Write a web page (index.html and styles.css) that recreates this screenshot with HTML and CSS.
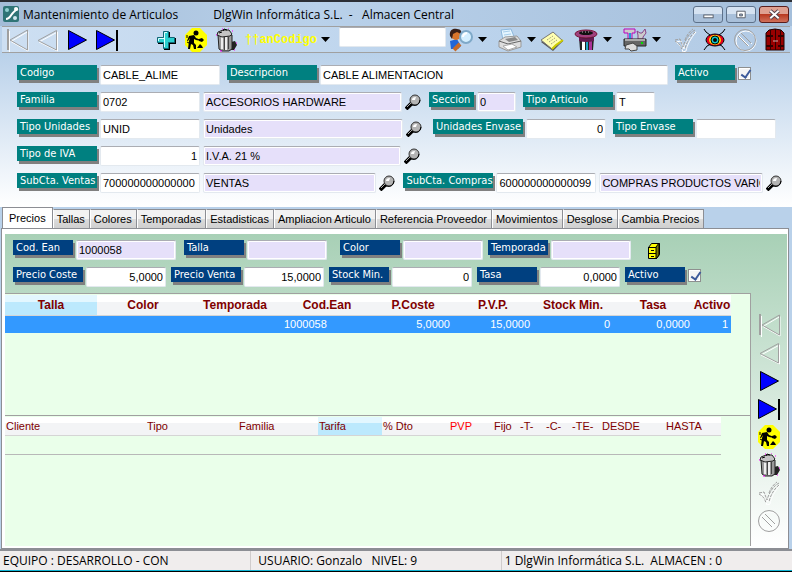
FILE: index.html
```
<!DOCTYPE html>
<html lang="es">
<head>
  <meta charset="UTF-8" />
  <meta name="viewport" content="width=device-width, initial-scale=1" />
  <title>Mantenimiento de Articulos</title>
  <link rel="stylesheet" href="styles.css">
</head>
<body>

  <!-- Iconos compartidos -->
  <svg class="sprites" aria-hidden="true">
    <symbol id="i-first" viewBox="0 0 24 24">
      <path d="M3.5 2v21M22 2.500L5 12.500L22 22z" transform="translate(1 1)" fill="none" stroke="#fff"/>
      <path d="M2 1h2v21H2z" fill="#a0a0a0"/>
      <path d="M22.500 2L5 12L22.500 22z" fill="none" stroke="#a0a0a0"/>
    </symbol>
    <symbol id="i-prev" viewBox="0 0 24 24">
      <path d="M21.500 3L3 13L21.500 22z" transform="translate(1 1)" fill="none" stroke="#fff"/>
      <path d="M21.500 2.500L3 12.500L21.500 22z" fill="none" stroke="#a0a0a0"/>
    </symbol>
    <symbol id="i-next" viewBox="0 0 24 24">
      <path d="M3.500 2.500L21.500 12L3.500 21.500z" fill="#00f" stroke="#000"/>
    </symbol>
    <symbol id="i-last" viewBox="0 0 24 24">
      <path d="M1.500 2.500L19.500 12L1.500 21.500z" fill="#00f" stroke="#000"/>
      <path d="M21 2h2v21h-2z" fill="#000"/>
    </symbol>
    <symbol id="i-work" viewBox="0 0 24 24">
      <path d="M8 0h8l7 7v10l-7 7H8l-7-7V7z" fill="#ff0"/>
      <circle cx="12" cy="5" r="2.500"/>
      <path d="M5 8l5-1 2 3 5 2v1l-5-1-2-1 0 4 2 2v4h-2l-1-4-2-1-1 5H4l1-8 1-3-2 3H3z"/>
      <path d="M15 11l3-1 2 2-2 2-3-1z"/>
      <path d="M13 20l3-4 2 2 1 2z"/>
      <path d="M3 7v3M3 14l2 1" stroke="#000"/>
    </symbol>
    <symbol id="i-trash" viewBox="0 0 24 24">
      <path d="M17 14l4-1 2 4-3 5h-4z" fill="#222"/>
      <path d="M4 7h14v14l-3 2H8l-3-2z" fill="#999" stroke="#222"/>
      <path d="M8 9v12M12 9v13" stroke="#eee" stroke-width="2"/>
      <path d="M10.500 9v13M14.500 9v12" stroke="#444"/>
      <path d="M3 7l1-3 5-2 6 0 3 4-2 2-8 1z" fill="#c4c4c4" stroke="#222"/>
      <path d="M9 3l1-2 3 1M5 5l3-1" fill="none" stroke="#000"/>
      <path d="M2 7h1M8 1h1M14 0h1M18 3h1M20 22h1M22 15h1M6 23h2" stroke="#f0f" stroke-width="1"/>
    </symbol>
    <symbol id="i-check" viewBox="0 0 24 24">
      <path d="M2 13l5-1 3 8C12 13 16 6 22 3C17 9 13 16 12 22L9 23C8 19 6 16 2 13" transform="translate(1 1)" fill="none" stroke="#fff"/>
      <path d="M2 12l5-1 3 8C12 12 16 5 22 2M22 4C17 8 13 15 12 21M2 13C6 15 8 18 9 22M12 12C13 8 17 3 20 1" fill="none" stroke="#a0a0a0" stroke-dasharray="3 1"/>
    </symbol>
    <symbol id="i-no" viewBox="0 0 24 24">
      <circle cx="13" cy="13" r="10" fill="none" stroke="#fff"/>
      <circle cx="12" cy="12" r="10.500" fill="none" stroke="#a0a0a0"/>
      <path d="M6 8l10 10M9 6l10 10" stroke="#fff"/>
      <path d="M5 8l10 10M8 5l10 10" stroke="#a0a0a0"/>
    </symbol>
    <symbol id="i-lens" viewBox="0 0 16 16">
      <path d="M1 15l6-6" stroke="#000" stroke-width="4"/>
      <path d="M2 13l4-4" stroke="#aaa"/>
      <circle cx="10" cy="6" r="5" fill="#b4b4b4" stroke="#333" stroke-width="1"/>
      <path d="M7 6q0-3 4-3l-1 3z" fill="#fff"/>
      <path d="M7 11q7 2 8-5" fill="none" stroke="#000"/>
    </symbol>
    <symbol id="i-caret" viewBox="0 0 9 5">
      <path d="M0 0h9L4.500 5z"/>
    </symbol>
  </svg>

  <header class="titlebar">
    <svg class="app-icon" viewBox="0 0 16 16">
      <rect width="16" height="16" rx="2" fill="#2f7476"/>
      <path d="M3 13c4 0 4-3 6-5s3-4 6-5" fill="none" stroke="#fff" stroke-width="2"/>
      <circle cx="4" cy="4" r="2" fill="#8fd0d0"/>
      <circle cx="12" cy="12" r="2" fill="#cfe6ee"/>
      <circle cx="13" cy="3" r="2" fill="#fff"/>
    </svg>
    <span class="title-main">Mantenimiento de Articulos</span>
    <span class="title-company">DlgWin Informática S.L.&nbsp; -&nbsp;&nbsp; Almacen Central</span>
    <div class="window-buttons">
      <button aria-label="Minimizar"><svg viewBox="0 0 30 16"><rect x="10.500" y="8.500" width="10" height="3" fill="#fff" stroke="#555b66"/></svg></button>
      <button aria-label="Maximizar"><svg viewBox="0 0 30 16"><path d="M10.500 4.500h9v7h-9zM13.500 7.500h3v2h-3z" fill="#fff" fill-rule="evenodd" stroke="#555b66"/></svg></button>
      <button class="close" aria-label="Cerrar"><svg viewBox="0 0 30 16"><path d="M11 4l9 8M20 4l-9 8" stroke="#54404a" stroke-width="4"/><path d="M11 4l9 8M20 4l-9 8" stroke="#fff" stroke-width="2"/></svg></button>
    </div>
  </header>

  <nav class="toolbar">
    <div class="tools">
      <button aria-label="Primero" disabled><svg><use href="#i-first"/></svg></button>
      <button aria-label="Anterior" disabled><svg><use href="#i-prev"/></svg></button>
      <button aria-label="Siguiente"><svg><use href="#i-next"/></svg></button>
      <button aria-label="Ultimo"><svg><use href="#i-last"/></svg></button>
    </div>
    <div class="tools edit-tools">
      <button aria-label="Nuevo">
        <svg viewBox="0 0 24 24">
          <path d="M10 4h6v6h6v6h-6v6h-6v-6H4v-6h6z" fill="#000"/>
          <path d="M9.500 3.500h5v6h6v5h-6v6h-5v-6h-6v-5h6z" fill="#2cd0d0" stroke="#167"/>
          <path d="M10.500 19V4.500H13M4.500 13v-2.500H11" fill="none" stroke="#dff"/>
        </svg>
      </button>
      <button aria-label="Modificar"><svg><use href="#i-work"/></svg></button>
      <button aria-label="Borrar"><svg><use href="#i-trash"/></svg></button>
    </div>
    <div class="order">
      <select aria-label="Orden"><option>††anCodigo</option></select>
      <svg class="caret"><use href="#i-caret"/></svg>
    </div>
    <input class="search" type="text" aria-label="Buscar">
    <div class="tools">
      <button aria-label="Buscar">
        <svg viewBox="0 0 24 24">
          <path d="M1 13l7-2 4 7-3 3H2z" fill="#2266d8"/>
          <path d="M5 22l6-6" stroke="#c86a28" stroke-width="4"/>
          <circle cx="7" cy="7" r="5" fill="#d9762c"/>
          <path d="M1 8C0 2 4 0 8 1c4 0 5 3 4 5L8 4 4 6l-1 5z" fill="#3a2018"/>
          <circle cx="17" cy="9" r="6" fill="#d4efff" stroke="#7fa9c8" stroke-width="2"/>
          <path d="M14 9q0-3 4-4" fill="none" stroke="#fff" stroke-width="2"/>
        </svg>
      </button>
      <button class="drop" aria-label="Opciones de busqueda"><svg class="caret"><use href="#i-caret"/></svg></button>
    </div>
    <div class="tools menu-tools">
      <button aria-label="Imprimir">
        <svg viewBox="0 0 24 24">
          <path d="M5 12L3 2l10-1 4 10z" fill="#e5f5ff" stroke="#8bb7dc"/>
          <path d="M5 4l7-1M6 7l7-1" stroke="#a6cdea"/>
          <path d="M1 13l6-4 12-1 4 5v6l-13 4-9-4z" fill="#ddd" stroke="#999"/>
          <path d="M1 13l9 3 13-3" fill="none" stroke="#666"/>
          <path d="M7 11l10-2 3 3-9 2z" fill="#888"/>
          <path d="M5 18l9-2 5 3-9 3z" fill="#fff" stroke="#aaa"/>
        </svg>
      </button>
      <button class="drop" aria-label="Opciones de impresion"><svg class="caret"><use href="#i-caret"/></svg></button>
      <button class="note" aria-label="Notas">
        <svg viewBox="0 0 24 24">
          <path d="M1 14L12 5l11 8-10 10z" fill="#555"/>
          <path d="M1 12L13 4l10 9-11 8z" fill="#ffffb0" stroke="#777"/>
          <path d="M12 21l4-4 7-5" fill="none" stroke="#cc0" stroke-width="2"/>
          <path d="M7 12l6-4M9 14l6-4M11 16l6-4" stroke="#887" stroke-dasharray="1 1"/>
        </svg>
      </button>
    </div>
    <div class="tools menu-tools">
      <button aria-label="Asistente">
        <svg viewBox="0 0 24 24">
          <path d="M5 9h15l-1 13H6z" fill="#222"/>
          <path d="M8 12h3v10H8z" fill="#fff"/>
          <path d="M12 12h2v10h-2z" fill="#23a6c8"/>
          <path d="M15 12h3v10h-3z" fill="#a39"/>
          <ellipse cx="12" cy="6" rx="11" ry="4" fill="#a0407e" stroke="#713"/>
          <ellipse cx="12" cy="5" rx="7" ry="2" fill="#111"/>
          <path d="M5 9q7 3 15 0v4q-8 2-15 0z" fill="#631a50"/>
          <path d="M8 4h8" stroke="#bbb" stroke-dasharray="1 2"/>
        </svg>
      </button>
      <button class="drop" aria-label="Opciones del asistente"><svg class="caret"><use href="#i-caret"/></svg></button>
    </div>
    <div class="tools menu-tools">
      <button aria-label="Utilidades">
        <svg viewBox="0 0 24 24">
          <path d="M1 1h11v4H9v6H5V5H1z" fill="#ccc" stroke="#b0b"/>
          <path d="M6 5h2v6H6z" fill="#29d"/>
          <path d="M15 11V7l-1-4 3 2h2l3-4 1 4-3 4v2z" fill="#ccc" stroke="#848"/>
          <path d="M1 11h22v7H1z" fill="#666" stroke="#222"/>
          <path d="M2 11h20v2H2z" fill="#aaa"/>
          <path d="M18 15h2" stroke="#0d0" stroke-width="2"/>
          <path d="M3 17l7-2 4 3v4l-6 1-2-2H2z" fill="#ddd" stroke="#444"/>
        </svg>
      </button>
      <button class="drop" aria-label="Mas utilidades"><svg class="caret"><use href="#i-caret"/></svg></button>
    </div>
    <div class="tools end-tools">
      <button aria-label="Aceptar" disabled><svg><use href="#i-check"/></svg></button>
      <button aria-label="Ver">
        <svg viewBox="0 0 24 24">
          <path d="M1 1l2 3 4 3M22 1l-2 3-4 3M1 22l3-4 4-2M22 22l-3-4-4-2" fill="none" stroke="#000"/>
          <ellipse cx="12" cy="12" rx="9" ry="6" fill="#e8001c" stroke="#000"/>
          <ellipse cx="12" cy="12" rx="6" ry="5" fill="#ffd800"/>
          <circle cx="12" cy="12" r="4" fill="#1cc" stroke="#000"/>
          <circle cx="12" cy="12" r="2"/>
        </svg>
      </button>
      <button aria-label="Cancelar" disabled><svg><use href="#i-no"/></svg></button>
      <button aria-label="Salir">
        <svg viewBox="0 0 24 24">
          <path d="M3 22V5l3-3 6-1 6 1 3 3v17z" fill="#900" stroke="#200"/>
          <path d="M7.500 2v20M12.500 1v21M17.500 2v20" stroke="#300"/>
          <path d="M3 8h7M15 8h6M3 18h7M15 18h6" stroke="#300" stroke-width="2"/>
          <path d="M10 13h5" stroke="#caa"/>
        </svg>
      </button>
    </div>
  </nav>

  <form class="article">
    <div class="row row-code">
      <label class="tag w80" for="codigo">Codigo</label>
      <input class="w120" id="codigo" type="text" value="CABLE_ALIME">
      <label class="tag w90" for="descripcion">Descripcion</label>
      <input class="grow" id="descripcion" type="text" value="CABLE ALIMENTACION">
      <label class="tag w60" for="activo">Activo</label>
      <input id="activo" type="checkbox" checked>
    </div>
    <div class="row row-family">
      <label class="tag w80" for="familia">Familia</label>
      <input class="w100" id="familia" type="text" value="0702">
      <input class="grow" type="text" value="ACCESORIOS HARDWARE" aria-label="Nombre de familia" readonly>
      <button type="button" class="lens" aria-label="Buscar familia"><svg><use href="#i-lens"/></svg></button>
      <label class="tag w45" for="seccion">Seccion</label>
      <input class="w39" id="seccion" type="text" value="0" readonly>
      <label class="tag w90" for="tipo-articulo">Tipo Articulo</label>
      <input class="w39" id="tipo-articulo" type="text" value="T">
    </div>
    <div class="row row-units">
      <label class="tag w80" for="tipo-unidades">Tipo Unidades</label>
      <input class="w100" id="tipo-unidades" type="text" value="UNID">
      <input class="grow" type="text" value="Unidades" aria-label="Nombre de unidades" readonly>
      <button type="button" class="lens" aria-label="Buscar unidades"><svg><use href="#i-lens"/></svg></button>
      <label class="tag w90" for="unidades-envase">Unidades Envase</label>
      <input class="w80 num" id="unidades-envase" type="text" value="0">
      <label class="tag w80" for="tipo-envase">Tipo Envase</label>
      <input class="w80" id="tipo-envase" type="text">
    </div>
    <div class="row row-vat">
      <label class="tag w80" for="tipo-iva">Tipo de IVA</label>
      <input class="w100 num" id="tipo-iva" type="text" value="1">
      <input class="grow" type="text" value="I.V.A. 21 %" aria-label="Nombre de IVA" readonly>
      <button type="button" class="lens" aria-label="Buscar IVA"><svg><use href="#i-lens"/></svg></button>
    </div>
    <div class="row row-accounts">
      <label class="tag w80" for="ventas">SubCta. Ventas</label>
      <input class="w100" id="ventas" type="text" value="700000000000000">
      <input class="grow sales" type="text" value="VENTAS" aria-label="Nombre de ventas" readonly>
      <button type="button" class="lens" aria-label="Buscar subcuenta de ventas"><svg><use href="#i-lens"/></svg></button>
      <label class="tag w90" for="compras">SubCta. Compras</label>
      <input class="w100" id="compras" type="text" value="600000000000099">
      <input class="grow purchases" type="text" value="COMPRAS PRODUCTOS VARIO" aria-label="Nombre de compras" readonly>
      <button type="button" class="lens" aria-label="Buscar subcuenta de compras"><svg><use href="#i-lens"/></svg></button>
    </div>
  </form>

  <div class="tabs">
    <button class="active">Precios</button>
    <button>Tallas</button>
    <button>Colores</button>
    <button>Temporadas</button>
    <button>Estadisticas</button>
    <button>Ampliacion Articulo</button>
    <button>Referencia Proveedor</button>
    <button>Movimientos</button>
    <button>Desglose</button>
    <button>Cambia Precios</button>
  </div>

  <main class="page">
    <div class="panel">
      <form class="prices">
        <div class="row">
          <label class="tag w60" for="cod-ean">Cod. Ean</label>
          <input class="w100" id="cod-ean" type="text" value="1000058" readonly>
          <label class="tag w60" for="talla">Talla</label>
          <input class="w80" id="talla" type="text" readonly>
          <label class="tag w60 color-tag" for="color">Color</label>
          <input class="w80" id="color" type="text" readonly>
          <label class="tag w60" for="temporada">Temporada</label>
          <input class="w80" id="temporada" type="text" readonly>
          <button type="button" class="cabinet" aria-label="Archivo">
            <svg viewBox="0 0 14 18">
              <path d="M1.500 5.500l3-4h8v11l-3 4h-8z" fill="#ff0" stroke="#000"/>
              <path d="M9 5l3-4v12l-3 4z" fill="#770" stroke="#000"/>
              <path d="M1 5.500h8M1 11.500h8M4 8.500h3M4 14.500h3" stroke="#000"/>
            </svg>
          </button>
        </div>
        <div class="row">
          <label class="tag w70" for="coste">Precio Coste</label>
          <input class="w80 num" id="coste" type="text" value="5,0000">
          <label class="tag w70" for="venta">Precio Venta</label>
          <input class="w80 num" id="venta" type="text" value="15,0000">
          <label class="tag w60" for="stock">Stock Min.</label>
          <input class="w80 num" id="stock" type="text" value="0">
          <label class="tag w60" for="tasa">Tasa</label>
          <input class="w80 num" id="tasa" type="text" value="0,0000">
          <label class="tag w60" for="precio-activo">Activo</label>
          <input id="precio-activo" type="checkbox" checked>
        </div>
      </form>

      <div class="body">
        <div class="grids">
          <section class="grid">
            <table class="stock">
              <colgroup>
                <col class="c92"><col class="c92"><col class="c92"><col class="c92"><col class="c80"><col class="c80"><col class="c80"><col class="c80"><col class="c38">
              </colgroup>
              <thead>
                <tr><th class="sorted">Talla</th><th>Color</th><th>Temporada</th><th>Cod.Ean</th><th>P.Coste</th><th>P.V.P.</th><th>Stock Min.</th><th>Tasa</th><th>Activo</th></tr>
              </thead>
              <tbody>
                <tr><td></td><td></td><td></td><td>1000058</td><td class="num">5,0000</td><td class="num">15,0000</td><td class="num">0</td><td class="num">0,0000</td><td class="num">1</td></tr>
              </tbody>
            </table>
          </section>
          <section class="grid">
            <table class="rates">
              <colgroup>
                <col class="c141"><col class="c92"><col class="c80"><col class="c64"><col class="c47"><col class="c64"><col class="c26"><col class="c26"><col class="c26"><col class="c30"><col class="c64"><col class="c56">
              </colgroup>
              <thead>
                <tr><th>Cliente</th><th>Tipo</th><th>Familia</th><th class="sorted">Tarifa</th><th>% Dto</th><th class="pvp">PVP</th><th>Fijo</th><th>-T-</th><th>-C-</th><th>-TE-</th><th>DESDE</th><th>HASTA</th></tr>
              </thead>
              <tbody>
                <tr><td colspan="12"></td></tr>
              </tbody>
            </table>
          </section>
        </div>
        <nav class="side">
          <button aria-label="Primero" disabled><svg><use href="#i-first"/></svg></button>
          <button aria-label="Anterior" disabled><svg><use href="#i-prev"/></svg></button>
          <button aria-label="Siguiente"><svg><use href="#i-next"/></svg></button>
          <button aria-label="Ultimo"><svg><use href="#i-last"/></svg></button>
          <button aria-label="Modificar"><svg><use href="#i-work"/></svg></button>
          <button aria-label="Borrar"><svg><use href="#i-trash"/></svg></button>
          <button aria-label="Aceptar" disabled><svg><use href="#i-check"/></svg></button>
          <button aria-label="Cancelar" disabled><svg><use href="#i-no"/></svg></button>
        </nav>
      </div>
    </div>
  </main>

  <footer class="status">
    <span>EQUIPO : DESARROLLO - CON</span>
    <span>USUARIO: Gonzalo&nbsp;&nbsp; NIVEL: 9</span>
    <span>1 DlgWin Informática S.L.&nbsp; ALMACEN : 0</span>
  </footer>

</body>
</html>
```

FILE: styles.css
```
* {
  box-sizing: border-box;
}

body {
  margin: 0;
  min-height: 100vh;
  display: flex;
  flex-direction: column;
  border-bottom: 1px solid #000;
  font-family: "Liberation Sans", Arial, sans-serif;
  font-size: 11px;
  color: #000;
  background: #b9d1ea;
}

button {
  padding: 0;
  border: 0;
  background: none;
  font: inherit;
  color: inherit;
}

svg {
  display: block;
}

.sprites {
  position: absolute;
  width: 0;
  height: 0;
}

/* Barra de titulo */
.titlebar {
  display: flex;
  align-items: center;
  height: 26px;
  padding: 0 3px;
  border-top: 2px solid #2c2f36;
  background: linear-gradient(90deg, #a3bcd7, #b9d1ea 40%, #a5bfdb);
  font-family: "Open Sans", "Noto Sans", sans-serif;
  font-size: 12px;
}

.app-icon {
  width: 16px;
  height: 16px;
  margin-right: 4px;
}

.title-company {
  margin-left: 35px;
}

.window-buttons {
  display: flex;
  gap: 3px;
  margin-left: auto;
}

.window-buttons button {
  width: 30px;
  height: 17px;
  border: 1px solid #5d718a;
  border-radius: 3px;
  background: linear-gradient(#d5e2f1 50%, #a9c0da 50%);
}

.window-buttons .close {
  border-color: #5a1d1c;
  background: linear-gradient(#dfa091 50%, #b93a22 50%, #d0705a);
}

.window-buttons svg {
  width: 28px;
  height: 15px;
}

/* Barra de herramientas */
.toolbar {
  display: flex;
  align-items: center;
  height: 27px;
  margin: 0 2px;
  border-top: 1px solid #a0a0a0;
  border-bottom: 1px solid #a0a0a0;
  background: linear-gradient(90deg, #cddff2, #bbd3ec 60%, #b2cae4);
}

.tools {
  display: flex;
  align-items: center;
}

.tools button {
  width: 30px;
}

.tools svg {
  width: 24px;
  height: 24px;
  margin: 0 auto;
}

.tools .drop {
  width: 12px;
}

.tools .note {
  width: 24px;
  margin-left: 3px;
}

.toolbar .caret {
  width: 9px;
  height: 5px;
}

.edit-tools {
  margin-left: 29px;
}

.menu-tools {
  margin-left: 7px;
}

.end-tools {
  margin-left: 8px;
}

.order {
  display: flex;
  align-items: center;
  gap: 2px;
  margin: 0 9px 0 4px;
}

.order select {
  width: 74px;
  padding: 0;
  border: 0;
  background: none;
  appearance: none;
  color: #ff0;
  font: bold 12px "Liberation Mono", "Courier New", monospace;
}

.search {
  flex: 1;
  min-width: 40px;
  align-self: flex-start;
}

/* Campos */
input[type="text"] {
  height: 20px;
  padding: 0 2px;
  border: 1px solid #e3e9ef;
  border-top-color: #abadb3;
  border-radius: 2px;
  background: #fff;
  color: #000;
  font: 11px "Liberation Sans", Arial, sans-serif;
}

input[readonly] {
  background: #e6e0fa;
  box-shadow: inset 0 0 0 1px #fff;
}

input[type="checkbox"] {
  appearance: none;
  width: 13px;
  height: 13px;
  margin: 2px 0 0;
  border: 1px solid #8e8f8f;
  background: #f4f4f4;
  box-shadow: inset 0 0 0 1px #fff;
}

input[type="checkbox"]:checked::before {
  content: "";
  display: block;
  width: 4px;
  height: 8px;
  margin: 0 0 0 4px;
  border: solid #3c5a9a;
  border-width: 0 2px 2px 0;
  transform: rotate(35deg);
}

.num {
  text-align: right;
}

.row {
  display: flex;
  align-items: flex-start;
  gap: 3px;
}

.row > * {
  flex: none;
}

.row > .grow {
  flex: 1 1 0;
  min-width: 0;
}

.row > .sales {
  flex-grow: 17;
}

.row > .purchases {
  flex-grow: 16;
}

.row > input ~ .tag {
  margin-left: 4px;
}

.tag {
  height: 15px;
  padding-left: 3px;
  background: #008080;
  box-shadow: 2px 3px 0 #808080;
  color: #fff;
  font: 11px/16px "DejaVu Sans Condensed", Tahoma, sans-serif;
  white-space: nowrap;
}

.w39 { width: 39px; }
.w45 { width: 45px; }
.w60 { width: 60px; }
.w70 { width: 70px; }
.w80 { width: 80px; }
.w90 { width: 90px; }
.w100 { width: 100px; }
.w120 { width: 120px; }

.lens svg {
  width: 16px;
  height: 16px;
  margin-top: 2px;
}

.article {
  display: flex;
  flex-direction: column;
  gap: 7px;
  height: 154px;
  padding: 12px 10px 0 17px;
  background: linear-gradient(#b9d1ea, #fff);
}

.row-code { padding-right: 31px; }
.row-family { padding-right: 127px; }
.row-units { padding-right: 6px; }
.row-vat { padding-right: 362px; }

.article .lens + .tag {
  margin-left: 5px;
}

.article .row-units .lens + .tag {
  margin-left: 8px;
}

/* Pestañas */
.tabs {
  display: flex;
  align-items: flex-end;
  height: 21px;
  padding-left: 2px;
}

.tabs button {
  height: 19px;
  padding: 0 4px 0 3px;
  border: 1px solid #8c8e94;
  border-bottom: 0;
  border-left-color: #fff;
  background: linear-gradient(#f2f2f2 50%, #dcdcdc 50%, #cfcfcf);
  white-space: nowrap;
}

.tabs .active {
  height: 21px;
  padding: 0 6px;
  border-left-color: #8c8e94;
  background: #fff;
}

.page {
  flex: 1;
  display: flex;
  margin: 0 3px 0 1px;
  padding: 5px 1px 2px 3px;
  border: 1px solid #8c8e94;
  background: #fff;
}

.panel {
  flex: 1;
  min-width: 0;
  display: flex;
  flex-direction: column;
  background: linear-gradient(#a8d0b6, #fff);
}

.prices {
  display: flex;
  flex-direction: column;
  gap: 7px;
  height: 59px;
  padding: 6px 8px 0;
}

.prices .tag {
  background: #004080;
}

.prices .row > input + .tag {
  margin-left: 2px;
}

.prices .row:first-child > .tag:nth-child(3) {
  margin-left: 5px;
}

.prices .row > .color-tag.tag {
  margin-left: 10px;
}

.cabinet {
  margin-left: 13px;
}

.cabinet svg {
  width: 14px;
  height: 18px;
  margin-top: 2px;
}

/* Rejillas */
.body {
  flex: 1;
  display: flex;
}

.grids {
  flex: 1;
  min-width: 0;
  display: flex;
  flex-direction: column;
  border-right: 1px solid #a0a0a0;
  background: #eaffea;
}

.grid {
  flex: 122;
  padding-top: 1px;
  border-top: 1px solid #a0a0a0;
}

.grid + .grid {
  flex: 131;
}

table {
  table-layout: fixed;
  border-collapse: collapse;
}

th,
td {
  height: 18px;
  padding: 0 3px;
  overflow: hidden;
  white-space: nowrap;
}

th {
  border-bottom: 1px solid #d5d5d5;
  background: linear-gradient(#fff 35%, #f3f4f6 35%);
  color: #800000;
}

th.sorted {
  background: linear-gradient(#e3f7ff 35%, #bce9fd 35%);
}

.stock {
  width: calc(100% - 19px);
}

.stock th {
  height: 20px;
  padding: 0;
  font-size: 12px;
}

.stock td {
  background: #3399ff;
  color: #fff;
}

.rates {
  width: calc(100% - 29px);
}

.rates th {
  padding: 0 1px;
  text-align: left;
  font-weight: normal;
}

.rates .pvp {
  color: #f00;
  text-align: center;
}

.rates td {
  height: 19px;
  border-bottom: 1px solid #b8b8b8;
}

.c26 { width: 26px; }
.c30 { width: 30px; }
.c38 { width: 38px; }
.c47 { width: 47px; }
.c56 { width: 56px; }
.c64 { width: 64px; }
.c80 { width: 80px; }
.c92 { width: 92px; }
.c141 { width: 141px; }

.side {
  display: flex;
  flex-direction: column;
  align-items: center;
  width: 36px;
  padding-top: 18px;
}

.side button {
  height: 28px;
}

.side svg {
  width: 24px;
  height: 24px;
}

/* Barra de estado */
.status {
  display: flex;
  height: 22px;
  border-top: 2px solid #8c8e94;
  border-bottom: 1px solid #10b4d4;
  background: #f0eded;
  font: 12px/19px "Open Sans", "Noto Sans", sans-serif;
}

.status span {
  flex: 1 1 250px;
  padding-left: 3px;
  white-space: nowrap;
}

.status span + span {
  border-left: 1px solid #d0cccc;
}

.status span:nth-child(2) {
  padding-left: 7px;
}

.status span:last-child {
  flex-basis: 291px;
}
```
